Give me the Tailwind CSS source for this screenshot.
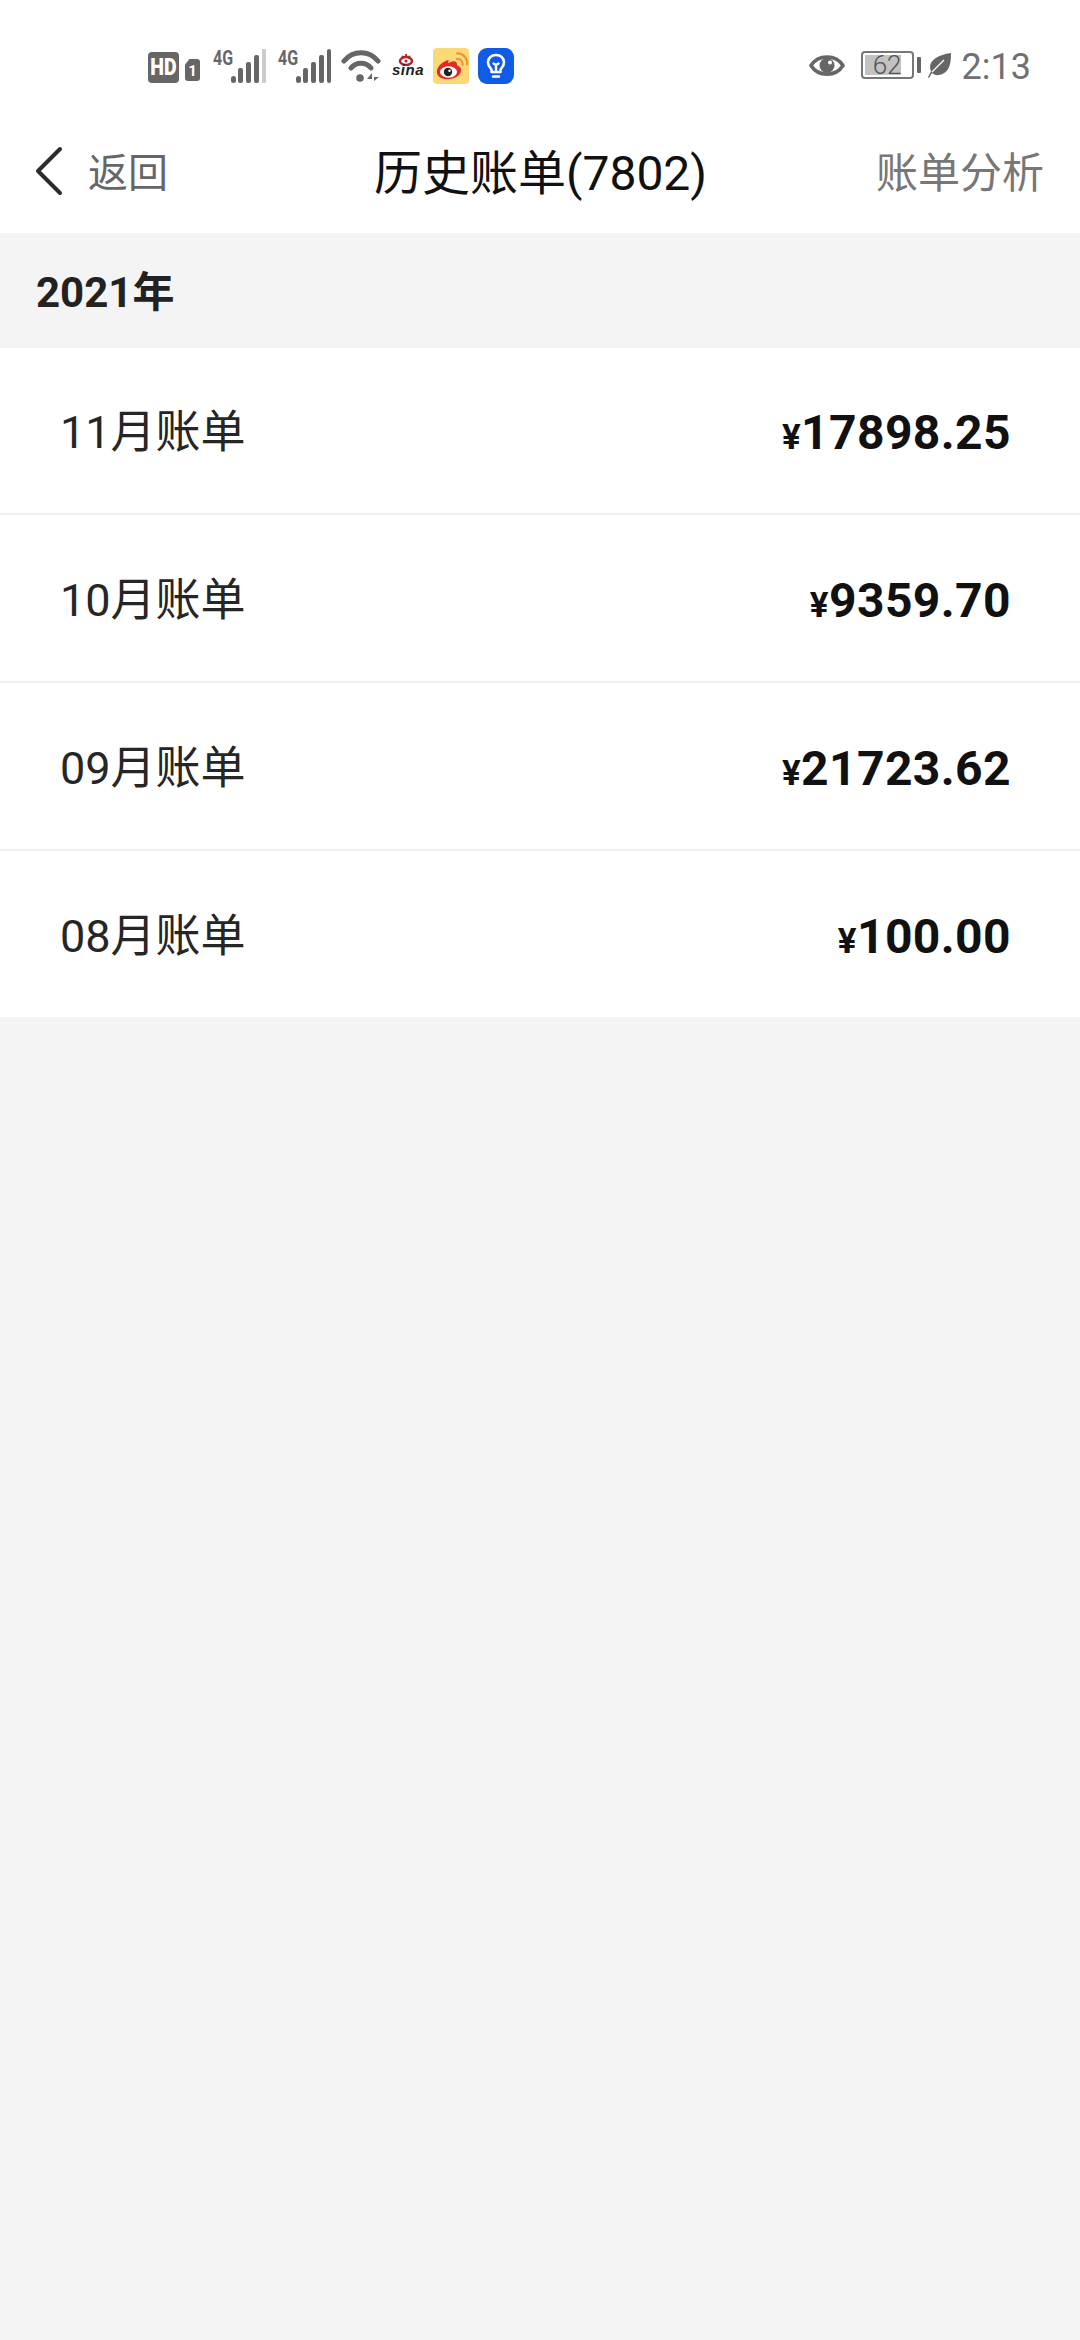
<!DOCTYPE html>
<html lang="zh">
<head>
<meta charset="utf-8">
<script src="https://cdn.jsdelivr.net/npm/@tailwindcss/browser@4"></script>
</head>
<body class="m-0">
<div class="w-[1080px] h-[2340px] bg-[#f4f4f4] overflow-hidden font-['Roboto','Noto_Sans_CJK_SC',sans-serif]">
  <!-- status bar -->
  <div class="h-[134px] bg-white flex items-start justify-between pt-[48px] pl-[148px] pr-[49px]">
    <div class="flex items-center h-[36px]">
      <div class="w-[31px] h-[31px] rounded-[4px] bg-[#666] text-white text-[23px] leading-[31px] font-black text-center font-['Roboto'] mt-[2px]"><span class="inline-block scale-x-[0.85]">HD</span></div>
      <div class="relative ml-[6px] mt-[8px] w-[15px] h-[22px] bg-[#666] rounded-[3px] [clip-path:polygon(0_25%,30%_0,100%_0,100%_100%,0_100%)] text-white text-[15px] leading-[24px] font-bold text-center">1</div>
      <div class="ml-[13px] w-[53px] h-[34px] relative">
        <span class="absolute left-0 top-[-2px] text-[20px] leading-[22px] font-bold text-[#666] font-['Roboto'] origin-left scale-x-[0.8]">4G</span>
        <svg class="absolute left-0 top-0" width="53" height="34" viewBox="0 0 53 34"><rect x="18" y="27" width="5" height="7" rx="2.500" fill="#666"/><rect x="25" y="19" width="5" height="15" rx="2" fill="#666"/><rect x="33" y="13" width="5" height="21" rx="2" fill="#666"/><rect x="41" y="6" width="5" height="28" rx="2" fill="#666"/><rect x="49" y="0" width="4" height="34" rx="1" fill="#ccc"/></svg>
      </div>
      <div class="ml-[12px] w-[53px] h-[34px] relative">
        <span class="absolute left-0 top-[-2px] text-[20px] leading-[22px] font-bold text-[#666] font-['Roboto'] origin-left scale-x-[0.8]">4G</span>
        <svg class="absolute left-0 top-0" width="53" height="34" viewBox="0 0 53 34"><rect x="18" y="27" width="5" height="7" rx="2.500" fill="#666"/><rect x="25" y="19" width="5" height="15" rx="2" fill="#666"/><rect x="33" y="13" width="5" height="21" rx="2" fill="#666"/><rect x="41" y="6" width="5" height="28" rx="2" fill="#666"/><rect x="49" y="0" width="4" height="34" rx="2" fill="#666"/></svg>
      </div>
      <svg class="ml-[10px]" width="40" height="34" viewBox="0 0 40 34" fill="none"><path d="M3 12C12 1 28 1 37 12" stroke="#666" stroke-width="5" stroke-linecap="round"/><path d="M10 19C15 12.500 25 12.500 30 19" stroke="#666" stroke-width="5" stroke-linecap="round"/><circle cx="19" cy="29" r="3.800" fill="#666"/><path d="M31 34V24L26 30H31ZM33 22V32L38 28H33Z" fill="#666"/></svg>
      <div class="relative ml-[9px] w-[34px] h-[28px] mt-[2px]">
        <svg class="absolute left-[7px] top-0" width="18" height="13" viewBox="0 0 18 13" fill="none"><ellipse cx="9" cy="8" rx="6" ry="4" stroke="#b3242a" stroke-width="2.500"/><circle cx="9" cy="8" r="1.500" fill="#b3242a"/><path d="M5 3L7 5M9 1V4M13 3L11 5" stroke="#b3242a" stroke-width="1.800"/></svg>
        <span class="absolute left-[2px] top-[9px] text-[15px] leading-[16px] font-bold italic text-[#222] font-['Liberation_Sans'] tracking-[0.5px]">sina</span>
      </div>
      <svg class="ml-[9px]" width="36" height="36" viewBox="0 0 36 36"><rect width="36" height="36" rx="4" fill="#fdd976"/><path d="M15 12C8 14 3 20 4 25C5 30 11 32 17 31C24 30 29 26 28 21C27.500 18.500 25 18 24 17C24.500 14 22 12.500 19 13.500C17.500 14 16 15 15 15C15.500 13 16 12 15 12Z" fill="#e32a2a"/><ellipse cx="15.500" cy="24" rx="8.500" ry="5.800" fill="#fff"/><circle cx="15" cy="24" r="4.200" fill="#222"/><circle cx="16.500" cy="22.800" r="1.200" fill="#fff"/><path d="M24 11C27 10.500 30 13 29.500 17M24 5.500C29.500 5 35 10 34 16.500" fill="none" stroke="#e89a3a" stroke-width="2.200" stroke-linecap="round"/></svg>
      <svg class="ml-[9px]" width="36" height="36" viewBox="0 0 36 36" fill="none"><rect width="36" height="36" rx="9" fill="#0f5ce6"/><path d="M13.500 24V22C13.500 20.500 10 18.500 10 14.500C10 10 13.500 7 18 7C22.500 7 26 10 26 14.500C26 18.500 22.500 20.500 22.500 22V24Z" stroke="#fff" stroke-width="2.600" stroke-linejoin="round"/><path d="M15 28.500H21M18 24V17M15.500 15.500L18 17L20.500 15.500" stroke="#fff" stroke-width="2.400" stroke-linecap="round"/></svg>
    </div>
    <div class="flex items-center h-[36px] mt-[-1px]">
      <svg width="36" height="27" viewBox="0 0 36 27" fill="none"><path d="M2 13.500C9 2 27 2 34 13.500C27 25 9 25 2 13.500Z" stroke="#666" stroke-width="3.500"/><circle cx="18" cy="13.500" r="7.500" fill="#666"/><circle cx="21" cy="10.500" r="2" fill="#fff"/></svg>
      <div class="relative ml-[16px] w-[53px] h-[28px] rounded-[4px] border-2 border-[#777] bg-white p-[2px]">
        <div class="w-[36px] h-full bg-[#c2c2c2]"></div>
        <span class="absolute inset-0 text-center text-[26px] leading-[25px] text-[#555] font-['Roboto'] font-light">62</span>
      </div>
      <div class="ml-[3px] w-[4px] h-[16px] rounded-[1px] bg-[#666]"></div>
      <svg class="ml-[7px]" width="23" height="25" viewBox="0 0 23 25"><path d="M23 0C23 10 22 20 11 22C8 22.500 5.500 21.500 4 20L1 25L0 24L3 18.500C-1 9 8 2 23 0Z" fill="#666"/><path d="M4 19L16 7" stroke="#fff" stroke-width="1.300"/></svg>
      <span class="ml-[11px] mt-[3px] text-[36px] leading-[36px] text-[#707070] font-normal">2:13</span>
    </div>
  </div>
  <!-- nav -->
  <div class="relative h-[99px] bg-white flex items-start justify-between pl-[35px] pr-[36px]">
    <div class="flex items-center h-[80px]">
      <svg class="mb-[7px]" width="28" height="50" viewBox="0 0 28 50" fill="none"><path d="M25 3L3 25L25 47" stroke="#2c2c2c" stroke-width="4" stroke-linecap="round" stroke-linejoin="round"/></svg>
      <span class="ml-[25px] text-[40px] leading-[50px] text-[#666]">返回</span>
    </div>
    <div class="absolute left-[374px] top-0 h-[80px] flex items-center text-[48px] leading-[56px] text-[#111] whitespace-nowrap">历史账单(7802)</div>
    <div class="flex items-center h-[80px] text-[42px] leading-[50px] text-[#777]">账单分析</div>
  </div>
  <!-- year -->
  <div class="h-[115px] flex items-center pl-[36px] pt-[3px] text-[42px] font-bold text-[#222]">2021年</div>
  <!-- rows -->
  <div class="bg-white">
    <div class="h-[167px] flex items-center justify-between pl-[60px] pr-[69px] pt-[5px] border-b-2 border-[#f0f0f0]">
      <span class="text-[45px] text-[#262626]">11月账单</span>
      <span class="font-bold text-[48px] text-[#111] tracking-[0.4px]"><span class="text-[35px]">¥</span>17898.25</span>
    </div>
    <div class="h-[168px] flex items-center justify-between pl-[60px] pr-[69px] pt-[5px] border-b-2 border-[#f0f0f0]">
      <span class="text-[45px] text-[#262626]">10月账单</span>
      <span class="font-bold text-[48px] text-[#111] tracking-[0.4px]"><span class="text-[35px]">¥</span>9359.70</span>
    </div>
    <div class="h-[168px] flex items-center justify-between pl-[60px] pr-[69px] pt-[5px] border-b-2 border-[#f0f0f0]">
      <span class="text-[45px] text-[#262626]">09月账单</span>
      <span class="font-bold text-[48px] text-[#111] tracking-[0.4px]"><span class="text-[35px]">¥</span>21723.62</span>
    </div>
    <div class="h-[166px] flex items-center justify-between pl-[60px] pr-[69px] pt-[5px]">
      <span class="text-[45px] text-[#262626]">08月账单</span>
      <span class="font-bold text-[48px] text-[#111] tracking-[0.4px]"><span class="text-[35px]">¥</span>100.00</span>
    </div>
  </div>
</div>
</body>
</html>
